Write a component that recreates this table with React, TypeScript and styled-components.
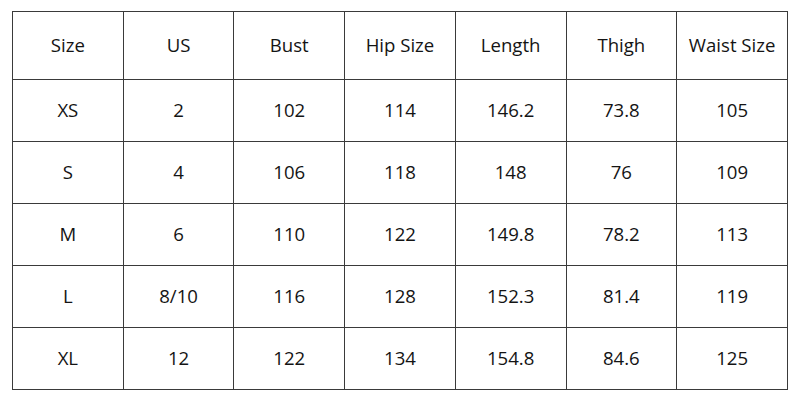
import React from "react";
import styled, { createGlobalStyle } from "styled-components";

const Global = createGlobalStyle`
  html, body { margin: 0; padding: 0; background: #ffffff; }
  body { font-family: "Open Sans", "Liberation Sans", sans-serif; color: #111; }
`;

const Page = styled.div`
  width: 800px;
  height: 400px;
  padding: 11px 0 0 12px;
  box-sizing: border-box;
`;

const Table = styled.table`
  border-collapse: collapse;
  table-layout: fixed;
  width: 776px;
`;

const Cell = styled.td<{ $head?: boolean }>`
  border: 1.5px solid #3a3a3a;
  height: ${(p) => (p.$head ? 68 : 62)}px;
  padding: 0 0 ${(p) => (p.$head ? 3 : 2)}px 0;
  box-sizing: border-box;
  text-align: center;
  vertical-align: middle;
  font-size: 18.6px;
  font-weight: 400;
  color: #141414;
`;

const headers = ["Size", "US", "Bust", "Hip Size", "Length", "Thigh", "Waist Size"];
const rows = [
  ["XS", "2", "102", "114", "146.2", "73.8", "105"],
  ["S", "4", "106", "118", "148", "76", "109"],
  ["M", "6", "110", "122", "149.8", "78.2", "113"],
  ["L", "8/10", "116", "128", "152.3", "81.4", "119"],
  ["XL", "12", "122", "134", "154.8", "84.6", "125"],
];

export default function App() {
  return (
    <>
      <Global />
      <Page>
        <Table>
          <tbody>
            <tr>
              {headers.map((h) => (
                <Cell key={h} $head>
                  {h}
                </Cell>
              ))}
            </tr>
            {rows.map((r) => (
              <tr key={r[0]}>
                {r.map((c, i) => (
                  <Cell key={i}>{c}</Cell>
                ))}
              </tr>
            ))}
          </tbody>
        </Table>
      </Page>
    </>
  );
}
